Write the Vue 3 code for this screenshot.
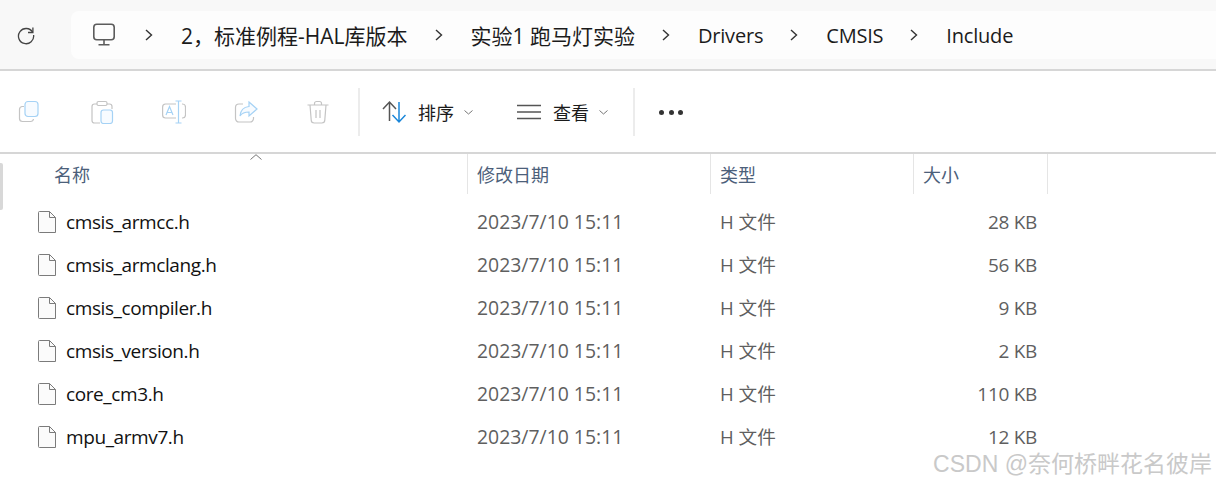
<template>
  <div class="explorer">
    <div class="topbar">
      <svg class="refresh" width="20" height="20" viewBox="0 0 20 20" fill="none" stroke="#444" stroke-width="1.3">
        <path d="M16.6 7.2A7.6 7.6 0 1 0 17.6 10" />
        <path d="M16.9 2.6v4.9h-4.9" />
      </svg>
      <div class="address">
        <svg class="pc" width="24" height="24" viewBox="0 0 24 24" fill="none" stroke="#5c5c5c" stroke-width="1.6">
          <rect x="1.800" y="1.300" width="20.400" height="15.400" rx="3" />
          <path d="M12 17v4.500M6.500 21.800h11" />
        </svg>
        <template v-for="crumb in crumbs" :key="crumb.text">
          <svg class="chevron" width="8" height="12" viewBox="0 0 8 12" fill="none" stroke="#333" stroke-width="1.400">
            <path d="M1 1l5.500 5L1 11" />
          </svg>
          <span class="crumb" :class="{ cjk: crumb.cjk }">{{ crumb.text }}</span>
        </template>
      </div>
    </div>

    <div class="toolbar">
      <div class="actions">
        <svg width="24" height="24" viewBox="0 0 24 24" fill="none" stroke-width="1.200">
          <path d="M6 6.500H4a3 3 0 0 0-2.500 3v9a3 3 0 0 0 3 3h8a3 3 0 0 0 3-2.500" stroke="#c4c4c4" />
          <rect x="7" y="1.500" width="13" height="15" rx="3" fill="#f7fbff" stroke="#a5d2f5" />
        </svg>
        <svg width="24" height="24" viewBox="0 0 24 24" fill="none" stroke-width="1.200">
          <path d="M7 4H4.500A2.500 2.500 0 0 0 2 6.500v14A2.500 2.500 0 0 0 4.500 23H10M17 4h2.500A2.500 2.500 0 0 1 22 6.500V9" stroke="#c4c4c4" />
          <rect x="7" y="1.500" width="10" height="4" rx="1.500" stroke="#c4c4c4" />
          <rect x="11" y="10" width="11.500" height="13.500" rx="2.500" fill="#f7fbff" stroke="#a5d2f5" />
        </svg>
        <svg width="24" height="24" viewBox="0 0 24 24" fill="none" stroke-width="1.200">
          <path d="M14 4H3.500A3 3 0 0 0 .6 7v8a3 3 0 0 0 2.900 3H14M20 4h.500a3 3 0 0 1 3 3v8a3 3 0 0 1-3 3H20" stroke="#c4c4c4" />
          <path d="M13.500 1h6M13.500 23h6M16.500 1v22M4 15l3.500-8.500L11 15M5.300 12.500h4.400" stroke="#a5d2f5" />
        </svg>
        <svg width="24" height="24" viewBox="0 0 24 24" fill="none" stroke-width="1.200">
          <path d="M9 4H5a3.500 3.500 0 0 0-3.500 3.500v11A3.500 3.500 0 0 0 5 22h11a3.500 3.500 0 0 0 3.500-3.500V17" stroke="#c4c4c4" />
          <path d="M15 2l8 7-8 7v-4c-4 0-7 1-9 4 .5-5.500 3.500-9 9-9.500z" fill="#f7fbff" stroke="#a5d2f5" />
        </svg>
        <svg width="24" height="24" viewBox="0 0 24 24" fill="none" stroke="#c4c4c4" stroke-width="1.200">
          <path d="M1.500 5h21M8.500 5V3.500a2 2 0 0 1 2-2h3a2 2 0 0 1 2 2V5M4 5l1.200 15a3 3 0 0 0 3 3h7.600a3 3 0 0 0 3-3L20 5M10 10v8M14 10v8" />
        </svg>
      </div>
      <div class="divider"></div>
      <div class="menu sort">
        <svg width="24" height="24" viewBox="0 0 24 24" fill="none" stroke-width="1.500">
          <path d="M1 9l6.500-7L14 9M7.500 2v19" stroke="#555" />
          <path d="M10.500 15l6.500 7 6.500-7M17 2v19" stroke="#1a86d9" />
        </svg>
        <span>排序</span>
        <svg class="caret" width="9" height="5" viewBox="0 0 9 5" fill="none" stroke="#777" stroke-width="1">
          <path d="M.5.500l4 3.500 4-3.500" />
        </svg>
      </div>
      <div class="menu view">
        <svg width="24" height="24" viewBox="0 0 24 24" fill="none" stroke="#555" stroke-width="1.500">
          <path d="M0 5.500h24M0 12h24M0 18.500h24" />
        </svg>
        <span>查看</span>
        <svg class="caret" width="9" height="5" viewBox="0 0 9 5" fill="none" stroke="#777" stroke-width="1">
          <path d="M.5.500l4 3.500 4-3.500" />
        </svg>
      </div>
      <div class="divider second"></div>
      <div class="more"><i></i><i></i><i></i></div>
    </div>

    <div class="listing">
      <div class="scrollbar"></div>
      <svg class="sort-arrow" width="12" height="6" viewBox="0 0 12 6" fill="none" stroke="#777" stroke-width="1">
        <path d="M.5 5.500L6 .7l5.500 4.800" />
      </svg>
      <div class="row head">
        <div class="cell name-head">名称</div>
        <div class="cell">修改日期</div>
        <div class="cell">类型</div>
        <div class="cell">大小</div>
      </div>
      <div class="rows">
        <div v-for="file in files" :key="file.name" class="row item">
          <div class="cell name">
            <svg width="18" height="22" viewBox="0 0 18 22" fill="#fbfbfb" stroke="#7b7b7b" stroke-width="1">
              <path d="M1.500.500h10l6 6v15h-16a1 1 0 0 1-1-1v-19a1 1 0 0 1 1-1z" />
              <path d="M11.500.500v6h6" fill="none" />
            </svg>
            <span>{{ file.name }}</span>
          </div>
          <div class="cell date">2023/7/10 15:11</div>
          <div class="cell type">H 文件</div>
          <div class="cell size">{{ file.size }}</div>
        </div>
      </div>
    </div>

    <div class="watermark">CSDN @奈何桥畔花名彼岸</div>
  </div>
</template>

<script setup>
const crumbs = [
  { text: '2，标准例程-HAL库版本', cjk: true },
  { text: '实验1 跑马灯实验', cjk: true },
  { text: 'Drivers' },
  { text: 'CMSIS' },
  { text: 'Include' }
]

const files = [
  { name: 'cmsis_armcc.h', size: '28 KB' },
  { name: 'cmsis_armclang.h', size: '56 KB' },
  { name: 'cmsis_compiler.h', size: '9 KB' },
  { name: 'cmsis_version.h', size: '2 KB' },
  { name: 'core_cm3.h', size: '110 KB' },
  { name: 'mpu_armv7.h', size: '12 KB' }
]
</script>

<style>
html,
body {
  margin: 0;
  background: #fff;
}
</style>

<style scoped>
.explorer {
  position: relative;
  width: 1216px;
  height: 483px;
  overflow: hidden;
  background: #fff;
  font-family: "Open Sans", "Noto Sans CJK SC", sans-serif;
  font-size: 20px;
  color: #1b1b1b;
}

.topbar {
  display: flex;
  align-items: center;
  height: 71px;
  padding-left: 16px;
  box-sizing: border-box;
  background: #f8f8f8;
  border-bottom: 2px solid #d6d6d6;
}

.refresh {
  flex: none;
  margin-right: 35px;
}

.address {
  flex: 1;
  display: flex;
  align-items: center;
  height: 48px;
  padding-left: 21px;
  margin-top: 1px;
  background: #fdfdfd;
  border-radius: 8px 0 0 8px;
}

.pc {
  flex: none;
  margin-right: 29px;
}

.chevron {
  flex: none;
  margin-right: 28px;
}

.crumb {
  margin-right: 27px;
  white-space: nowrap;
  letter-spacing: -0.2px;
}

.crumb.cjk {
  font-size: 21px;
  letter-spacing: 0;
}

.toolbar {
  display: flex;
  align-items: center;
  height: 83px;
  padding-top: 1px;
  box-sizing: border-box;
  border-bottom: 2px solid #d6d6d6;
}

.actions {
  display: flex;
  gap: 48px;
  padding-left: 18px;
  width: 358px;
  box-sizing: border-box;
}

.divider {
  width: 2px;
  height: 48px;
  background: #ececec;
  margin-right: 22px;
}

.divider.second {
  margin-left: 25px;
  margin-right: 24px;
}

.menu {
  display: flex;
  align-items: center;
  font-size: 18px;
}

.menu span {
  margin: 0 10px 0 12px;
}

.view {
  margin-left: 44px;
}

.more {
  display: flex;
  gap: 4.5px;
}

.more i {
  width: 5px;
  height: 5px;
  border-radius: 50%;
  background: #333;
}

.listing {
  position: relative;
}

.scrollbar {
  position: absolute;
  left: 0;
  top: 9px;
  width: 3px;
  height: 47px;
  background: #d8d8d8;
  border-radius: 0 2px 2px 0;
}

.sort-arrow {
  position: absolute;
  left: 250px;
  top: 0;
}

.row {
  display: grid;
  grid-template-columns: 467px 243px 203px 135px;
}

.head {
  height: 40px;
  align-items: stretch;
  font-size: 18px;
  color: #4c607a;
}

.head .cell {
  display: flex;
  align-items: center;
  padding-left: 9px;
  border-left: 1px solid #e5e5e5;
}

.head .name-head {
  padding-left: 54px;
  border-left: none;
}

.head .cell:last-child {
  border-right: 1px solid #e5e5e5;
}

.rows {
  padding-top: 6px;
}

.item {
  height: 43px;
  align-items: center;
  color: #5f5f5f;
  font-size: 19px;
  line-height: 26px;
}

.item .cell {
  padding-left: 10px;
}

.item .date {
  font-size: 19.4px;
}

.item .type {
  font-size: 18.6px;
}

.item .name {
  display: flex;
  align-items: center;
  gap: 10px;
  padding-left: 38px;
  color: #111;
  letter-spacing: -0.4px;
}

.item .size {
  padding-right: 11px;
  text-align: right;
  letter-spacing: -0.3px;
}

.watermark {
  position: absolute;
  right: 4px;
  bottom: 4px;
  font-family: "Liberation Sans", "Noto Sans CJK SC", sans-serif;
  font-size: 23px;
  color: #c9c9c9;
  white-space: nowrap;
}
</style>
